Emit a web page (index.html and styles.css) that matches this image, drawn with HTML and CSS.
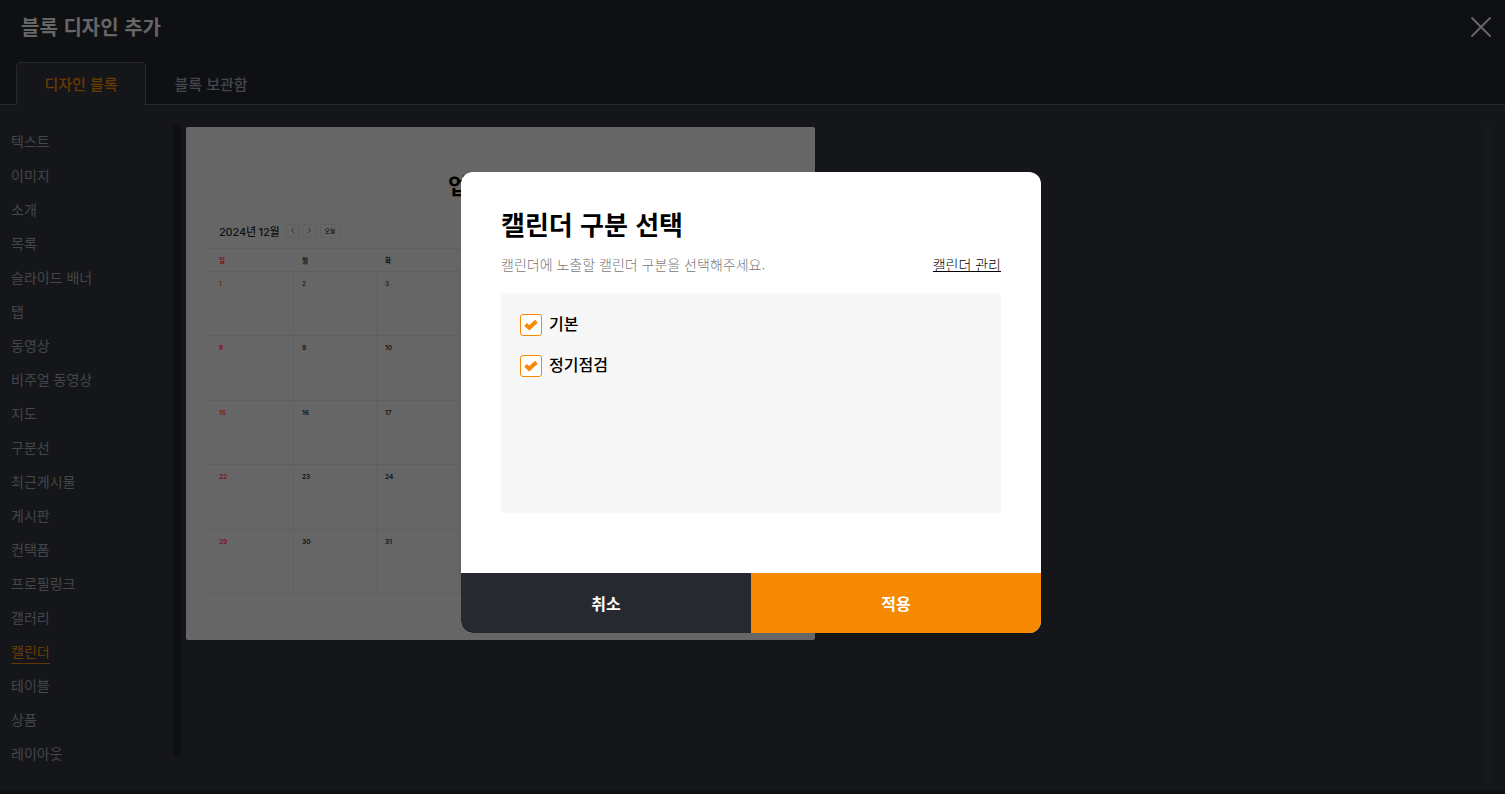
FILE: index.html
```
<!DOCTYPE html>
<html lang="ko">
<head>
<meta charset="utf-8">
<title>블록 디자인 추가</title>
<link rel="stylesheet" href="styles.css">
</head>
<body>
<div class="app">
  <header class="header">
    <h1 class="title">블록 디자인 추가</h1>
    <svg class="close" width="22" height="22" viewBox="0 0 22 22"><path d="M1.5 1.5 20.5 20.5M20.5 1.5 1.5 20.5"/></svg>
  </header>
  <nav class="tabs">
    <span class="tab tab-active">디자인 블록</span>
    <span class="tab">블록 보관함</span>
  </nav>
  <main class="main">
    <ul class="menu">
      <li><span>텍스트</span></li><li><span>이미지</span></li><li><span>소개</span></li><li><span>목록</span></li><li><span>슬라이드 배너</span></li><li><span>탭</span></li><li><span>동영상</span></li><li><span>비주얼 동영상</span></li><li><span>지도</span></li><li><span>구분선</span></li><li><span>최근게시물</span></li><li><span>게시판</span></li><li><span>컨택폼</span></li><li><span>프로필링크</span></li><li><span>갤러리</span></li><li><span class="current">캘린더</span></li><li><span>테이블</span></li><li><span>상품</span></li><li><span>레이아웃</span></li>
    </ul>
    <div class="track"><div class="thumb"></div></div>
    <section class="preview">
      <h2 class="preview-title">업</h2>
      <div class="toolbar">
        <span class="month">2024년 12월</span>
        <span class="tool"><svg width="5" height="7" viewBox="0 0 5 7"><path d="M4 1 1.5 3.5 4 6"/></svg></span>
        <span class="tool"><svg width="5" height="7" viewBox="0 0 5 7"><path d="M1 1 3.5 3.5 1 6"/></svg></span>
        <span class="tool today">오늘</span>
      </div>
      <div class="calendar">
        <div class="week days"><span>일</span><span>월</span><span>화</span><span></span></div>
        <div class="week first"><span>1</span><span>2</span><span>3</span><span></span></div>
        <div class="week"><span>8</span><span>9</span><span>10</span><span></span></div>
        <div class="week"><span>15</span><span>16</span><span>17</span><span></span></div>
        <div class="week"><span>22</span><span>23</span><span>24</span><span></span></div>
        <div class="week"><span>29</span><span>30</span><span>31</span><span></span></div>
      </div>
    </section>
    <div class="track-right"></div>
  </main>
  <div class="dialog">
    <div class="dialog-body">
      <h2 class="dialog-title">캘린더 구분 선택</h2>
      <div class="intro"><p class="desc">캘린더에 노출할 캘린더 구분을 선택해주세요.</p><a class="manage">캘린더 관리</a></div>
      <div class="options">
        <label class="option"><span class="box"><svg width="14" height="12" viewBox="0 0 14 12"><path d="M1.6 5.3 5.3 8.8 12.4 2.2"/></svg></span>기본</label>
        <label class="option"><span class="box"><svg width="14" height="12" viewBox="0 0 14 12"><path d="M1.6 5.3 5.3 8.8 12.4 2.2"/></svg></span>정기점검</label>
      </div>
    </div>
    <div class="actions"><button class="button cancel">취소</button><button class="button apply">적용</button></div>
  </div>
</div>
</body>
</html>
```
FILE: styles.css
```
* { box-sizing: border-box; margin: 0; padding: 0; }
body { width: 1505px; height: 794px; overflow: hidden; background: #0f1013; font-family: "Noto Sans CJK KR", "Noto Sans", sans-serif; }
.app { position: relative; height: 794px; display: flex; flex-direction: column; }
.header { height: 62px; padding: 12px 13px 0 21px; display: flex; justify-content: space-between; align-items: flex-start; }
.title { font-size: 20px; line-height: 29px; font-weight: 700; color: #666; }
.close { margin-top: 4px; fill: none; stroke: #666; stroke-width: 2; }
.tabs { height: 43px; display: flex; padding-left: 16px; box-shadow: inset 0 -1px #28292d; }
.tab { width: 130px; height: 43px; padding-top: 1px; line-height: 41px; text-align: center; font-size: 15px; font-weight: 500; color: #45474a; }
.tab-active { padding-top: 0; background: #15161a; border: 1px solid #28292d; border-bottom: 0; border-radius: 5px 5px 0 0; color: #6b3a03; }
.main { height: 685px; display: flex; background: #15161a; position: relative; }
.menu { width: 173px; padding: 20px 0 0 11px; list-style: none; }
.menu li { height: 34px; font-size: 14px; color: #444649; }
.menu span { display: block; width: max-content; line-height: 32px; }
.menu .current { height: 34px; color: #6b3a03; background: linear-gradient(#633604, #633604) 0 28px / 100% 1px no-repeat; }
.track { width: 8px; height: 638px; margin-top: 19px; background: #14151a; }
.thumb { height: 632px; background: #0f1013; border-radius: 4px; }
.preview { width: 629px; height: 513px; margin: 22px 0 0 5px; padding: 43px 23px 0; background: #666; border-radius: 2px; color: #111; }
.preview-title { margin-left: 239px; font-size: 22px; line-height: 28px; height: 49px; font-weight: 700; color: #000; }
.toolbar { display: flex; align-items: center; gap: 2px; height: 23px; padding-left: 10px; font-family: Inter, "Noto Sans CJK KR", sans-serif; }
.month { width: 64.5px; font-size: 11px; font-weight: 500; letter-spacing: -.2px; white-space: nowrap; }
.tool { width: 14px; height: 14px; border: 1px solid #606060; border-radius: 2px; display: flex; align-items: center; justify-content: center; }
.tool svg { fill: none; stroke: #222; stroke-width: .8; }
.today { width: 21px; font-size: 6px; font-weight: 500; }
.tool + .tool { margin-left: 1px; }
.calendar { margin-top: 6px; font-family: Inter, "Noto Sans CJK KR", sans-serif; }
.week { height: 64.4px; display: grid; grid-template-columns: 85px 83px 83px 83px; overflow: hidden; width: 334px; border-bottom: 1px solid #5f5f5f; font-size: 6.5px; font-weight: 600; }
.week span { padding: 7px 0 0 8px; line-height: 10px; border-right: 1px solid #606060; }
.week span:first-child { color: #801313; padding-left: 10px; }
.first span { font-weight: 500; }
.days { height: 24px; border-top: 1px solid #5f5f5f; }
.days span { border-right: 0; }
.track-right { width: 8px; height: 658px; margin: 19px 14px 0 auto; background: #17181b; }
.dialog { position: absolute; left: 461px; top: 172px; width: 580px; height: 461px; border-radius: 12px; overflow: hidden; background: #fff; color: #000; display: flex; flex-direction: column; }
.dialog-body { height: 401px; padding: 33px 40px 0; }
.dialog-title { font-size: 26px; line-height: 38px; font-weight: 700; }
.intro { display: flex; justify-content: space-between; height: 20px; margin-top: 11px; line-height: 20px; font-weight: 300; white-space: nowrap; }
.desc { font-size: 14px; color: #777; }
.manage { font-size: 14px; height: 18px; border-bottom: 1px solid #000; }
.options { height: 220px; margin-top: 19px; padding: 20px 19px; background: #f7f7f7; display: flex; flex-direction: column; gap: 17px; }
.option { display: flex; height: 24px; line-height: 20px; gap: 7px; font-size: 16px; font-weight: 500; }
.box { width: 22px; height: 22px; margin-top: 1px; border: 1px solid #f68802; border-radius: 3px; background: #fff; display: flex; align-items: center; justify-content: center; }
.box svg { fill: none; stroke: #f68802; stroke-width: 3.9; }
.actions { display: flex; height: 60px; }
.button { width: 290px; border: 0; padding-bottom: 1px; font: 700 16px "Noto Sans CJK KR", sans-serif; color: #fff; }
.cancel { background: #262930; }
.apply { background: #f68802; }
```
